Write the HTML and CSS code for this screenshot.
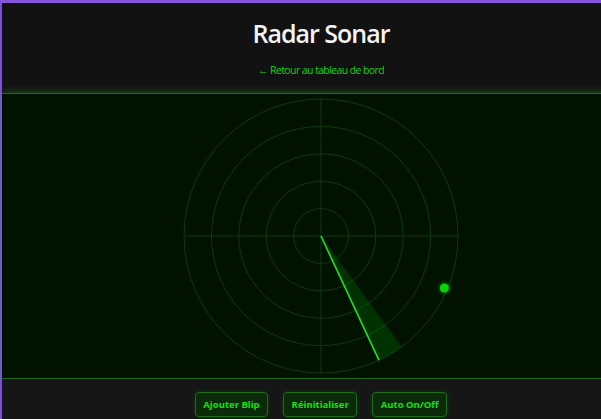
FILE: index.html
```html
<!DOCTYPE html>
<html lang="fr">
<head>
<meta charset="utf-8">
<title>Radar Sonar</title>
<link rel="stylesheet" href="styles.css">
</head>
<body>
<div class="page">
  <header class="header">
    <h1 class="title">Radar Sonar</h1>
    <a class="back" href="#">← Retour au tableau de bord</a>
  </header>
  <main class="radar-zone">
    <svg class="radar" width="280" height="280" viewBox="0 0 280 280">
      <g class="grid">
        <circle cx="140" cy="140" r="137"/>
        <circle cx="140" cy="140" r="109.6"/>
        <circle cx="140" cy="140" r="82.2"/>
        <circle cx="140" cy="140" r="54.8"/>
        <circle cx="140" cy="140" r="27.4"/>
        <line x1="3" y1="140" x2="277" y2="140"/>
        <line x1="140" y1="3" x2="140" y2="277"/>
      </g>
      <path class="wedge" d="M140,140 L220.5,250.8 A137,137 0 0,1 197.9,264.2 Z"/>
      <line class="sweep" x1="140" y1="140" x2="197.9" y2="264.2"/>
      <circle class="blip" cx="263.3" cy="192" r="4.5"/>
    </svg>
  </main>
  <footer class="controls">
    <button class="btn">Ajouter Blip</button>
    <button class="btn">Réinitialiser</button>
    <button class="btn">Auto On/Off</button>
  </footer>
</div>
</body>
</html>
```

FILE: styles.css
```css
html, body {
  margin: 0;
  padding: 0;
  overflow: hidden;
  background: #161616;
}
body {
  font-family: "Open Sans", "Noto Sans", sans-serif;
}
.page {
  width: 638px;
  height: 416px;
  border-top: 3px solid #8656dc;
  border-left: 2px solid #7c4fd8;
  display: flex;
  flex-direction: column;
  background: #161616;
}
.header {
  height: 90px;
  background: #121212;
  display: flex;
  flex-direction: column;
  align-items: center;
  box-sizing: border-box;
  padding-top: 15px;
}
.title {
  margin: 0;
  color: #f4f4f4;
  font-size: 25px;
  font-weight: 600;
  line-height: 30px;
  letter-spacing: -1px;
}
.back {
  margin-top: 15px;
  color: #17d017;
  font-size: 10.5px;
  line-height: 14px;
  text-decoration: none;
  letter-spacing: -0.6px;
}
.radar-zone {
  height: 286px;
  box-sizing: border-box;
  background: #011201;
  border-top: 1px solid #246624;
  border-bottom: 1px solid #246624;
  box-shadow: 0 0 9px rgba(40, 200, 40, 0.4);
  display: flex;
  align-items: center;
  justify-content: center;
}
.radar {
  display: block;
}
.grid circle, .grid line {
  fill: none;
  stroke: #0c3a0c;
  stroke-width: 1;
}
.wedge {
  fill: rgba(0, 200, 0, 0.18);
}
.sweep {
  stroke: #1fe01f;
  stroke-width: 1.6;
}
.blip {
  fill: #0ad20a;
  filter: drop-shadow(0 0 2px rgba(0, 255, 0, 0.6));
}
.controls {
  flex: 1;
  display: flex;
  justify-content: center;
  gap: 15px;
  padding-top: 13px;
  background: #161616;
}
.btn {
  height: 25px;
  padding: 0 7.5px;
  background: #0a2a0a;
  border: 1px solid #1c6e1c;
  border-radius: 4px;
  color: #14e014;
  font-family: "Open Sans", "Noto Sans", sans-serif;
  font-size: 9.5px;
  font-weight: 700;
  box-shadow: 0 0 4px rgba(0, 200, 0, 0.2);
}
```
